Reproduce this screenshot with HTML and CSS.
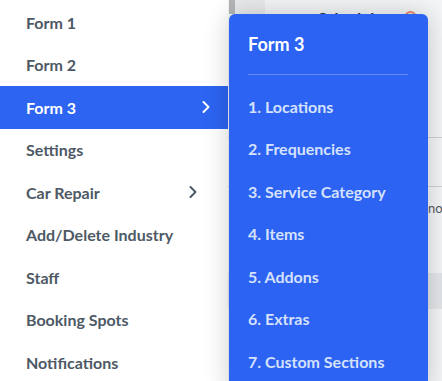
FILE: index.html
```html
<!DOCTYPE html>
<html lang="en">

<head>
    <meta charset="UTF-8">
    <meta name="viewport" content="width=device-width, initial-scale=1.0">
    <title>Menu</title>
    <link rel="stylesheet" href="styles.css">
</head>

<body>
    <div class="page">
        <nav class="sidebar">
            <a class="nav-item">Form 1</a>
            <a class="nav-item">Form 2</a>
            <a class="nav-item active">Form 3
                <svg class="chevron" viewBox="0 0 10 14" width="10" height="14"><path d="M2.5 2l5 5-5 5" /></svg>
            </a>
            <a class="nav-item">Settings</a>
            <a class="nav-item has-sub">Car Repair
                <svg class="chevron" viewBox="0 0 10 14" width="10" height="14"><path d="M2.5 2l5 5-5 5" /></svg>
            </a>
            <a class="nav-item">Add/Delete Industry</a>
            <a class="nav-item">Staff</a>
            <a class="nav-item">Booking Spots</a>
            <a class="nav-item">Notifications</a>
        </nav>

        <main class="content">
            <div class="topbar">
                <span class="tab-edge"></span>
                <span class="tab"></span>
                <span class="topbar-title">Schedule</span>
                <span class="status-dot"></span>
            </div>
            <div class="row row-first"></div>
            <div class="row row-line"></div>
            <div class="row row-text">no</div>
            <div class="row row-head"></div>
        </main>

        <div class="submenu">
            <div class="submenu-title">Form 3</div>
            <div class="submenu-divider"></div>
            <a class="submenu-item">1. Locations</a>
            <a class="submenu-item">2. Frequencies</a>
            <a class="submenu-item">3. Service Category</a>
            <a class="submenu-item">4. Items</a>
            <a class="submenu-item">5. Addons</a>
            <a class="submenu-item">6. Extras</a>
            <a class="submenu-item">7. Custom Sections</a>
        </div>
    </div>
</body>

</html>
```

FILE: styles.css
```css
body {
    margin: 0;
    font-family: Lato, "Liberation Sans", sans-serif;
    background-color: #f4f5f6;
    overflow: hidden;
}

.page {
    position: relative;
    display: flex;
    height: 381px;
}

.sidebar {
    width: 228px;
    flex-shrink: 0;
    background-color: #ffffff;
    display: flex;
    flex-direction: column;
    padding-top: 1px;
}

.nav-item {
    display: flex;
    flex-shrink: 0;
    align-items: center;
    justify-content: space-between;
    height: 42.5px;
    padding: 0 17px 0 26px;
    font-size: 16px;
    font-weight: 700;
    color: #4d5965;
    cursor: pointer;
}

.nav-item.active {
    background-color: #2d64f1;
    color: #ffffff;
}

.nav-item.has-sub {
    padding-right: 30px;
}

.chevron {
    fill: none;
    stroke: currentColor;
    stroke-width: 2;
    stroke-linecap: round;
    stroke-linejoin: round;
}

.content {
    flex: 1;
    min-width: 0;
    display: flex;
    flex-direction: column;
}

.topbar {
    display: flex;
    align-items: flex-start;
    height: 40px;
}

.tab-edge {
    width: 6px;
    height: 14px;
    background-color: #b4b5b6;
    margin-left: 1px;
}

.tab {
    width: 30px;
    height: 14px;
    background-color: #e8eaec;
}

.topbar-title {
    margin: 8px 0 0 53px;
    font-size: 16px;
    font-weight: 700;
    color: #2f3640;
}

.status-dot {
    width: 9px;
    height: 9px;
    border: 2px solid #ef8a6a;
    border-radius: 50%;
    margin: 11px 25px 0 auto;
}

.row-first {
    height: 97px;
    border-bottom: 1px solid #cfd2d5;
}

.row-line {
    height: 48px;
    border-bottom: 1px solid #cfd2d5;
}

.row-text {
    height: 48px;
    line-height: 42px;
    padding-left: 200px;
    font-size: 13px;
    color: #555b61;
    white-space: nowrap;
}

.row-head {
    margin-top: 38px;
    height: 36px;
    background-color: #e3e6e9;
}

.submenu {
    position: absolute;
    left: 229px;
    top: 14px;
    width: 199px;
    height: 380px;
    box-sizing: border-box;
    padding: 17px 20px 0 19px;
    background-color: #2c63f2;
    border-radius: 6px 6px 0 0;
    box-shadow: 0 0 26px rgba(0, 0, 0, 0.2);
    display: flex;
    flex-direction: column;
}

.submenu-title {
    font-size: 18px;
    font-weight: 700;
    line-height: 26px;
    color: #ffffff;
}

.submenu-divider {
    flex-shrink: 0;
    height: 1px;
    margin: 17px 0 10px;
    background-color: rgba(255, 255, 255, 0.25);
}

.submenu-item {
    display: flex;
    flex-shrink: 0;
    align-items: center;
    height: 42.5px;
    font-size: 16px;
    font-weight: 700;
    color: #d5e1fd;
    cursor: pointer;
}
```
